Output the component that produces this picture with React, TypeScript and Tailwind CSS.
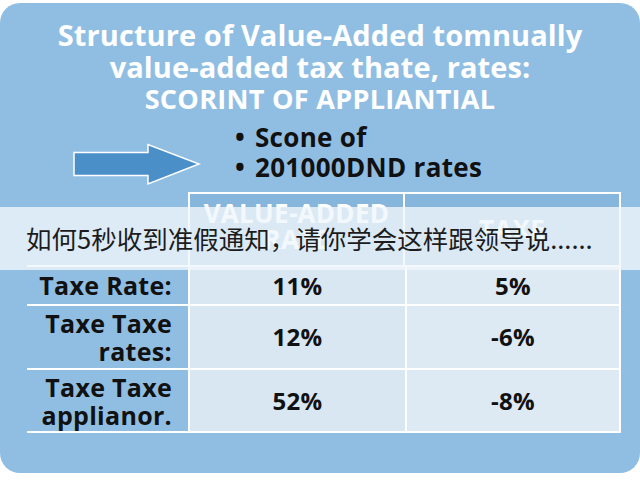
import React from "react";

function Arrow() {
  return (
    <svg width="130" height="44" viewBox="0 0 130 44" className="block">
      <polygon
        points="2,9.5 76,9.5 76,1.5 127,21 76,41 76,32.5 2,32.5"
        fill="#4a8fc8"
        stroke="#ffffff"
        strokeWidth="1.5"
        strokeLinejoin="miter"
      />
    </svg>
  );
}

export default function App() {
  const font = { fontFamily: '"Open Sans", "Noto Sans", sans-serif' };
  return (
    <div className="relative w-[640px] h-[480px] bg-white overflow-hidden" style={font}>
      <div className="mt-[3px] h-[470px] rounded-[20px] bg-[#90bee3] flex flex-col pt-[16px]">
        <div className="text-center text-white font-bold text-[29px] leading-[32px] tracking-[0.1px]">
          <div>Structure of Value-Added tomnually</div>
          <div>value-added tax thate, rates:</div>
          <div className="text-[27px] tracking-[0.3px]">SCORINT OF APPLIANTIAL</div>
        </div>
        <div className="flex mt-[7px] h-[60px]">
          <div className="ml-[72px] mt-[21px]">
            <Arrow />
          </div>
          <div className="ml-[33px] text-[26px] leading-[30px] font-bold text-[#111] tracking-[0.3px]">
            <div className="flex"><span className="w-[20px]">•</span><span>Scone of</span></div>
            <div className="flex"><span className="w-[20px]">•</span><span>201000DND rates</span></div>
          </div>
        </div>
        <div className="mt-[10px] ml-[27px] w-[594px] grid grid-cols-[161px_217px_216px] text-[#111] font-bold text-[24px] tracking-[0.3px]">
          <div className="h-[75px] border-b-2 border-white"></div>
          <div className="h-[75px] border-2 border-white bg-[#86b6dc] flex flex-col items-center pt-[6px] text-white text-[26px] leading-[26px]">
            <span>VALUE-ADDED</span>
            <span>RATE</span>
          </div>
          <div className="h-[75px] border-2 border-l-0 border-white bg-[#86b6dc] flex items-center justify-center text-white text-[26px]">
            TAXE
          </div>

          <div className="h-[39px] border-b-2 border-white flex items-center justify-end pr-[16px] text-[25px]">Taxe Rate:</div>
          <div className="h-[39px] border-b-2 border-l-2 border-white bg-[#d9e7f2] flex items-center justify-center">11%</div>
          <div className="h-[39px] border-b-2 border-x-2 border-white bg-[#dde9f3] flex items-center justify-center">5%</div>

          <div className="h-[64px] border-b-2 border-white flex flex-col items-end justify-center pr-[16px] text-[25px] leading-[28px] text-right">
            <span>Taxe Taxe</span>
            <span>rates:</span>
          </div>
          <div className="h-[64px] border-b-2 border-l-2 border-white bg-[#d9e7f2] flex items-center justify-center">12%</div>
          <div className="h-[64px] border-b-2 border-x-2 border-white bg-[#dde9f3] flex items-center justify-center">-6%</div>

          <div className="h-[63px] border-b-2 border-white flex flex-col items-end justify-center pr-[16px] text-[25px] leading-[28px] text-right">
            <span>Taxe Taxe</span>
            <span>applianor.</span>
          </div>
          <div className="h-[63px] border-b-2 border-l-2 border-white bg-[#d9e7f2] flex items-center justify-center">52%</div>
          <div className="h-[63px] border-b-2 border-x-2 border-white bg-[#dde9f3] flex items-center justify-center">-8%</div>
        </div>
      </div>
      <div className="absolute left-0 top-[207px] w-[640px] h-[63px] bg-[rgba(240,246,251,0.8)] flex items-center pl-[26px]">
        <span
          className="text-[25.5px] text-[#1c1c1c]"
          style={{ fontFamily: '"Noto Sans CJK SC", "Noto Sans", sans-serif' }}
        >
          如何5秒收到准假通知，请你学会这样跟领导说......
        </span>
      </div>
    </div>
  );
}
